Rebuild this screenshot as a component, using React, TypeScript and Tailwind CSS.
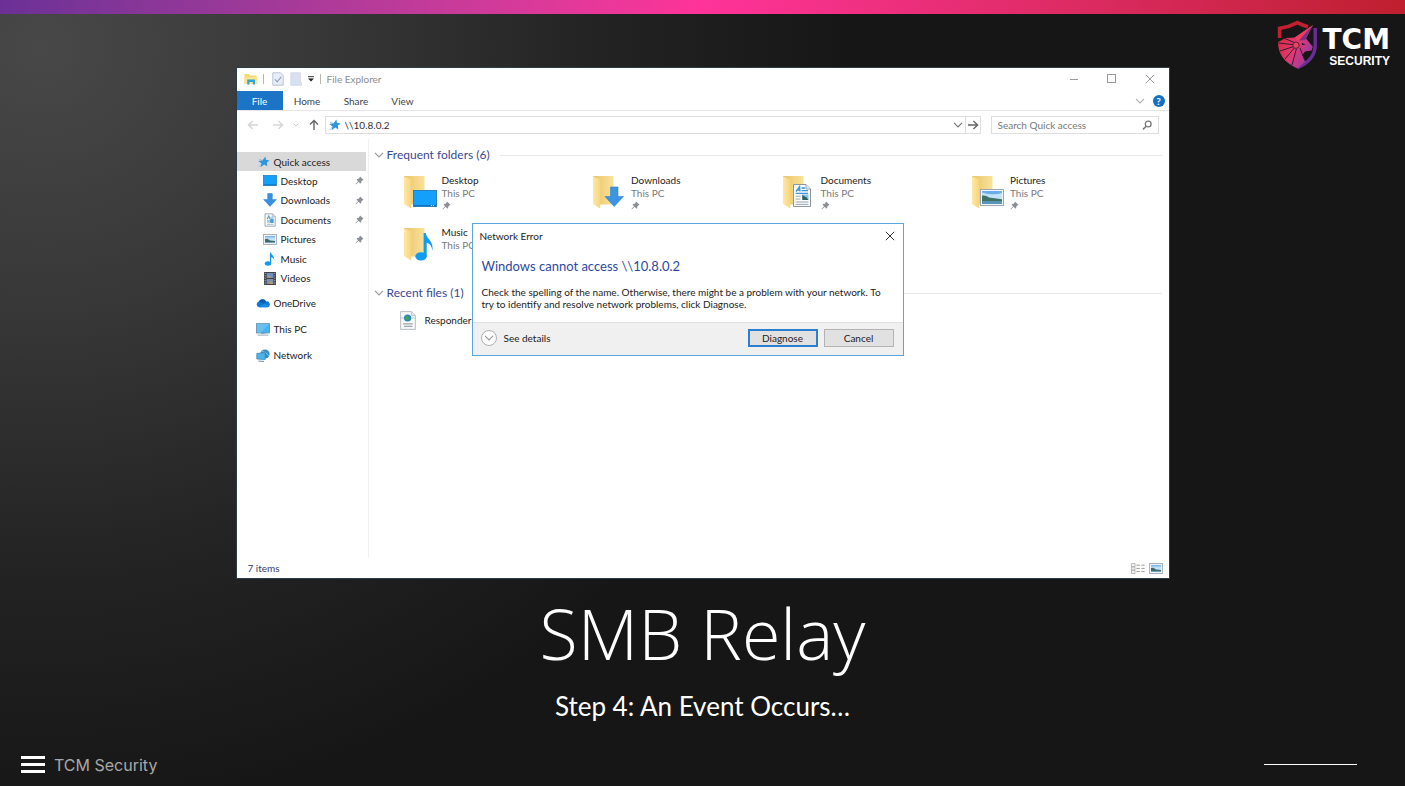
import React from "react";

type IconProps = { className?: string };

const Pin = ({ className = "" }: IconProps) => (
  <svg viewBox="0 0 10 10" className={`size-[9px] shrink-0 ${className}`} aria-hidden="true">
    <path d="M5.6 0.6 9.4 4.3 8.5 4.8 7.2 5.9 6.7 8 5.7 8.2 4 6.5 1.2 9.2 0.5 9.3 0.7 8.6 3.4 5.9 1.8 4.2 2.2 3.3 4.2 3 5.1 1.6Z" fill="#8b9097" />
  </svg>
);

const Star = ({ className = "" }: IconProps) => (
  <svg viewBox="0 0 12 12" className={`size-[12px] shrink-0 ${className}`} aria-hidden="true">
    <path d="M7.4 0.6 7.9 3.8 11.6 4.4 8.9 6.6 9.2 10.3 6.2 8.6 2.6 11.2 3.4 7.6 0.4 5.1 4.6 4.3Z" fill="#2f96dd" />
    <path d="M3.4 7.8 0.8 10.9M1.2 3.4 4.6 4.4" stroke="#7dbdea" strokeWidth="0.8" />
  </svg>
);

const DesktopIcon = ({ className = "" }: IconProps) => (
  <svg viewBox="0 0 14 11" className={`h-[11px] w-[14px] shrink-0 ${className}`} aria-hidden="true">
    <rect x="0.4" y="0.4" width="13.2" height="10.2" fill="#14a0fa" stroke="#2a7fc4" strokeWidth="0.8" />
    <path d="M1 9.8h12" stroke="#0b6fc4" strokeWidth="0.9" />
  </svg>
);

const DownloadIcon = ({ className = "" }: IconProps) => (
  <svg viewBox="0 0 14 14" className={`size-[14px] shrink-0 ${className}`} aria-hidden="true">
    <path d="M4.7 0.5H9.3V6.6H13.4L7 13.4 0.6 6.6H4.7Z" fill="#3791e2" stroke="#2c7fcb" strokeWidth="0.5" />
  </svg>
);

const DocumentIcon = ({ className = "" }: IconProps) => (
  <svg viewBox="0 0 12 14" className={`h-[14px] w-[12px] shrink-0 ${className}`} aria-hidden="true">
    <path d="M1 0.8H8.6L11.2 3.4V13.2H1Z" fill="#f8fafc" stroke="#9aa3ac" strokeWidth="0.9" />
    <path d="M8.4 0.8V3.6H11.2" fill="#dde3e8" stroke="#9aa3ac" strokeWidth="0.6" />
    <path d="M3 6.2 4.8 3 5.8 6.2M6.4 5H9.4M3 8H9.4" stroke="#4fa2dc" strokeWidth="1.1" fill="none" />
    <rect x="6.2" y="6" width="3.4" height="4" fill="#4e9cc9" />
    <path d="M3 9.7H6M3 11.4H9.4" stroke="#9cb8ca" strokeWidth="0.8" />
  </svg>
);

const PictureIcon = ({ className = "" }: IconProps) => (
  <svg viewBox="0 0 14 11" className={`h-[11px] w-[14px] shrink-0 ${className}`} aria-hidden="true">
    <rect x="0.5" y="0.5" width="13" height="10" fill="#eef1f5" stroke="#a3adb8" strokeWidth="0.9" />
    <rect x="2" y="2" width="10" height="7" fill="#c3e0f8" />
    <path d="M2 2H12V3.6H2Z" fill="#7fbaef" />
    <path d="M2 5 4.4 4.8 7 6.4 12 7V9H2Z" fill="#3c6a66" />
    <path d="M2 8H12V9H2Z" fill="#6fa3c8" />
  </svg>
);

const MusicIcon = ({ className = "" }: IconProps) => (
  <svg viewBox="0 0 12 14" className={`h-[14px] w-[12px] shrink-0 ${className}`} aria-hidden="true">
    <ellipse cx="4" cy="11.5" rx="3.2" ry="2.2" fill="#1199f0" />
    <path d="M5.9 0.4H7C7.2 3 10.8 3.9 10.2 8.2 9.8 6.4 8.6 5.5 7.2 5.3V11.5H5.9Z" fill="#1199f0" />
  </svg>
);

const VideoIcon = ({ className = "" }: IconProps) => (
  <svg viewBox="0 0 12 13" className={`h-[13px] w-[12px] shrink-0 ${className}`} aria-hidden="true">
    <rect width="12" height="13" fill="#3e4148" />
    <path d="M1.2 0.8V13M10.8 0.8V13" stroke="#b4b7bc" strokeWidth="1" strokeDasharray="1.2 1.2" />
    <rect x="2.6" y="1" width="6.8" height="5" fill="#6d8fc4" />
    <rect x="2.6" y="7" width="6.8" height="5" fill="#7d91a8" />
    <path d="M3 5.6 5 3 7 5.6M5 12 7 9 9.2 12" fill="#c79a5a" />
  </svg>
);

const OneDriveIcon = () => (
  <svg viewBox="0 0 14 10" className="h-[10px] w-[14px] shrink-0" aria-hidden="true">
    <path d="M3.2 9.3A2.9 2.9 0 0 1 2.6 3.7 4.2 4.2 0 0 1 10.1 3.4 3 3 0 0 1 11.4 9.3Z" fill="#0f78d2" />
    <path d="M3.2 9.3 8 5.6 13.4 7.6A2.3 2.3 0 0 1 11.4 9.3Z" fill="#1b8be0" />
    <path d="M2.6 3.7A4.2 4.2 0 0 1 10.1 3.4L8 5.6Z" fill="#0a5db4" />
  </svg>
);

const ComputerIcon = () => (
  <svg viewBox="0 0 14 13" className="h-[13px] w-[14px] shrink-0" aria-hidden="true">
    <rect x="0.4" y="0.6" width="13.2" height="9.4" fill="#46b2f0" stroke="#6a8fa8" strokeWidth="0.8" />
    <path d="M1 1H13L5 9.6H1Z" fill="#66c0f4" />
    <path d="M5 10.5H9M1.5 12.1H12.5" stroke="#8fa9bb" strokeWidth="1" />
  </svg>
);

const NetworkIcon = () => (
  <svg viewBox="0 0 14 13" className="h-[13px] w-[14px] shrink-0" aria-hidden="true">
    <circle cx="9" cy="5" r="4.6" fill="#3a8dc4" />
    <path d="M6 2.2Q10 3 13 7" stroke="#a3d8f5" strokeWidth="0.7" fill="none" />
    <path d="M0.8 4.4 9.2 3.6V10.6L0.8 10Z" fill="#49b4ee" stroke="#3a7ca6" strokeWidth="0.7" />
    <path d="M2.4 12.1 8 12.4" stroke="#6a8fa8" strokeWidth="1" />
  </svg>
);

const FolderBase = () => (
  <>
    <defs>
      <linearGradient id="folderFront" x1="0" x2="1">
        <stop offset="0" stopColor="#ffe8a6" />
        <stop offset="1" stopColor="#f7d57c" />
      </linearGradient>
      <linearGradient id="folderBack" x1="0" x2="1">
        <stop offset="0" stopColor="#e9c46a" />
        <stop offset="1" stopColor="#fae29a" />
      </linearGradient>
    </defs>
    <path d="M1 1H21.5V29.5H6Z" fill="url(#folderBack)" />
    <path d="M1 1.4 8.2 4.6V33.4L1 29Z" fill="url(#folderFront)" />
  </>
);

type Badge = "desktop" | "downloads" | "documents" | "pictures" | "music";

const FolderIcon = ({ badge }: { badge: Badge }) => (
  <svg viewBox="0 0 35 35" className="size-[35px] shrink-0" aria-hidden="true">
    <FolderBase />
    {badge === "desktop" && (
      <g>
        <rect x="10.5" y="15.5" width="23" height="16" fill="#14a0fa" stroke="#2b80bd" />
        <path d="M11 30.5H33" stroke="#0d74c4" />
        <path d="M28 30.5H32" stroke="#bde0f8" strokeDasharray="1 1" />
      </g>
    )}
    {badge === "downloads" && (
      <path d="M18.5 12H26V21.5H31.5L22.2 31.5 13 21.5H18.5Z" fill="#3a95e4" stroke="#2f83cf" strokeWidth="0.6" />
    )}
    {badge === "documents" && (
      <g>
        <path d="M11.5 9.5H24L28.5 14V31.5H11.5Z" fill="#fbfcfd" stroke="#8d959d" />
        <path d="M24 9.5V14H28.5" fill="#e3e8ed" stroke="#8d959d" strokeWidth="0.8" />
        <path d="M14 16.5 17.6 11.5 18 16.5M15 15H18M19.5 13H23M19.5 15.6H26M13.6 18.4H26" stroke="#3d95da" strokeWidth="1.3" fill="none" />
        <path d="M20 19.5H26.5V25H20Z" fill="#8cc4ea" />
        <path d="M20.4 20 24.5 22.4 26.5 25H20.4Z" fill="#2f6157" />
        <path d="M13.5 21.2H18.5M13.5 24H18.5M13.5 27H26.5M13.5 29.4H26.5" stroke="#8f9aa5" strokeWidth="0.9" />
      </g>
    )}
    {badge === "pictures" && (
      <g>
        <rect x="9.5" y="14.5" width="23" height="16" fill="#f2f4f7" stroke="#9da7b2" />
        <rect x="11" y="16" width="20" height="13" fill="#c3e1f9" />
        <path d="M11 16H31V18Q22 21 11 17.4Z" fill="#6aadea" />
        <path d="M11 20.6Q15 20 18 22.6L31 24.2V26.4H11Z" fill="#3d7466" />
        <path d="M11 26H31V29H11Z" fill="#5794b8" />
      </g>
    )}
    {badge === "music" && (
      <g fill="#119bf2">
        <ellipse cx="18" cy="29.4" rx="5.7" ry="4.2" />
        <path d="M20.6 6H22.8C23.4 12 30.8 14 29.4 23.4 28.6 18.8 26.6 16.4 23.7 15.8V29.4H20.6Z" />
      </g>
    )}
  </svg>
);

const HtmlFileIcon = () => (
  <svg viewBox="0 0 16 19" className="h-[19px] w-[16px] shrink-0" aria-hidden="true">
    <path d="M0.6 0.6H11.6L15.4 4.4V18.4H0.6Z" fill="#f6f7f8" stroke="#b4b8bc" strokeWidth="0.9" />
    <path d="M11.4 0.6V4.6H15.4" fill="#e2e5e8" stroke="#b4b8bc" strokeWidth="0.7" />
    <path d="M0.8 7H15" stroke="#9fc3d8" strokeWidth="0.8" />
    <circle cx="7.6" cy="7" r="3.6" fill="#2c86b8" />
    <path d="M5.2 5Q8 4 8.6 6.2T6.6 9.4Q5 8 5.2 5ZM9.4 7.4 11 6.6 10 9.4Z" fill="#3fa557" />
    <path d="M3 12.8H12.8M4 15.3H12.4" stroke="#a0a5aa" strokeWidth="1.2" />
  </svg>
);

const Chevron = ({ className = "" }: IconProps) => (
  <svg viewBox="0 0 10 6" className={`h-[6px] w-[10px] shrink-0 ${className}`} aria-hidden="true">
    <path d="M1 0.8 5 4.8 9 0.8" fill="none" stroke="currentColor" strokeWidth="1.2" />
  </svg>
);

const Arrow = ({ className = "" }: IconProps) => (
  <svg viewBox="0 0 12 10" className={`h-[10px] w-[12px] shrink-0 ${className}`} aria-hidden="true">
    <path d="M1 5H10.4M6.4 1 10.6 5 6.4 9" fill="none" stroke="currentColor" strokeWidth="1.4" />
  </svg>
);

const Close = ({ className = "" }: IconProps) => (
  <svg viewBox="0 0 10 10" className={`size-[10px] ${className}`} aria-hidden="true">
    <path d="M0.8 0.8 9.2 9.2M9.2 0.8 0.8 9.2" stroke="currentColor" strokeWidth="1" />
  </svg>
);

const Shield = () => (
  <svg viewBox="0 0 42 50" className="h-[50px] w-[42px] shrink-0" aria-hidden="true">
    <defs>
      <linearGradient id="dogFill" x1="0" y1="0.2" x2="1" y2="0.8">
        <stop offset="0" stopColor="#d8283c" />
        <stop offset="0.5" stopColor="#e03a72" />
        <stop offset="1" stopColor="#8a3bb0" />
      </linearGradient>
    </defs>
    <path d="M2.6 18V8.4Q12 7 20.5 2.6 25 5 31 6.8" fill="none" stroke="#c3202f" strokeWidth="3.6" />
    <path d="M38.2 8V25Q38.2 40 20.5 47.6" fill="none" stroke="#6a2c97" strokeWidth="3.4" />
    <path d="M36 5 29 18.4 35.8 26.8 34.6 30.4 28 31.4 25.4 35 28.6 41.6 20.5 48.4Q4 41.5 1.4 27L1 22 9 18 17.8 17.6Z" fill="url(#dogFill)" />
    <path d="M36 5 17.8 17.6 20.4 21Z" fill="#ef3b5d" />
    <path d="M36 5 22 20.4 28 20Z" fill="#7d2d86" />
    <path d="M1.4 23 16 24.6M3 31 16.4 26.6M8 39 17.4 28M15 45 19.4 28.8M8 18.6 17 22.4M23 28 28 41" stroke="#2a1430" strokeWidth="0.9" />
    <circle cx="19" cy="25.2" r="3.2" fill="#e8455f" stroke="#561a3a" strokeWidth="0.9" />
    <path d="M24.8 23 28.6 24.6 25.2 25Z" fill="#1a1020" />
  </svg>
);

const quickItems = [
  { label: "Desktop", icon: <DesktopIcon />, pinned: true },
  { label: "Downloads", icon: <DownloadIcon />, pinned: true },
  { label: "Documents", icon: <DocumentIcon />, pinned: true },
  { label: "Pictures", icon: <PictureIcon />, pinned: true },
  { label: "Music", icon: <MusicIcon />, pinned: false },
  { label: "Videos", icon: <VideoIcon />, pinned: false },
];

const rootItems = [
  { label: "OneDrive", icon: <OneDriveIcon /> },
  { label: "This PC", icon: <ComputerIcon /> },
  { label: "Network", icon: <NetworkIcon /> },
];

const folders: { label: string; badge: Badge; pinned: boolean }[] = [
  { label: "Desktop", badge: "desktop", pinned: true },
  { label: "Downloads", badge: "downloads", pinned: true },
  { label: "Documents", badge: "documents", pinned: true },
  { label: "Pictures", badge: "pictures", pinned: true },
  { label: "Music", badge: "music", pinned: false },
];

function TitleBar() {
  return (
    <div className="flex h-[23px] items-center pr-[14px] pb-px pl-[7px]">
      <svg viewBox="0 0 14 12" className="h-[12px] w-[14px]" aria-hidden="true">
        <path d="M0.5 1H5L6 2.4H12.5V11H0.5Z" fill="#f8d775" />
        <path d="M0.5 4H13.5V11H0.5Z" fill="#fbe38f" />
        <path d="M3.2 11.5V6.6H11V11.5H8.8V9H5.4V11.5Z" fill="#2fa5dd" />
      </svg>
      <span className="mx-[5px] h-[10px] w-px bg-[#b5b5b5]" />
      <button type="button" aria-label="Properties" className="ml-[3px]">
        <svg viewBox="0 0 12 14" className="h-[14px] w-[12px]" aria-hidden="true">
          <path d="M0.8 0.8H8.6L11.2 3.4V13.2H0.8Z" fill="#e8eef8" stroke="#b6c0d3" strokeWidth="0.9" />
          <path d="M3 7.4 5.2 9.8 9.2 4.8" fill="none" stroke="#93a0ba" strokeWidth="1.1" />
        </svg>
      </button>
      <button type="button" aria-label="New folder" className="ml-[6px]">
        <svg viewBox="0 0 12 14" className="h-[14px] w-[12px]" aria-hidden="true">
          <path d="M0.8 0.8H10.4V9.6L11.4 10.4V13.2H0.8Z" fill="#d8e1f1" stroke="#cbd5e7" strokeWidth="0.8" />
        </svg>
      </button>
      <button type="button" aria-label="Customize toolbar" className="ml-[5px]">
        <svg viewBox="0 0 8 6" className="h-[6px] w-[8px]" aria-hidden="true">
          <path d="M1 0.7H7" stroke="#333" strokeWidth="1" />
          <path d="M1 2.4H7L4 5.6Z" fill="#222" />
        </svg>
      </button>
      <span className="mx-[5px] h-[10px] w-px bg-[#b5b5b5]" />
      <span className="pl-px text-[10px] leading-[14px] text-[#8e8e8e]">File Explorer</span>
      <div className="ml-auto flex items-center gap-[28px] text-[#9a9a9a]">
        <button type="button" aria-label="Minimize">
          <svg viewBox="0 0 10 10" className="size-[10px]" aria-hidden="true">
            <path d="M1 5.5H9" stroke="currentColor" />
          </svg>
        </button>
        <button type="button" aria-label="Maximize">
          <svg viewBox="0 0 10 10" className="size-[10px]" aria-hidden="true">
            <rect x="0.5" y="0.5" width="8" height="8" fill="none" stroke="currentColor" />
          </svg>
        </button>
        <button type="button" aria-label="Close window">
          <Close />
        </button>
      </div>
    </div>
  );
}

function Ribbon() {
  return (
    <div className="flex h-[20px] items-center border-b border-[#e6e6e6] text-[10px] leading-[14px] text-[#444]">
      <button type="button" className="h-[19px] w-[46px] bg-[#1b74c5] text-white">File</button>
      <button type="button" className="w-[49px]">Home</button>
      <button type="button" className="w-[49px]">Share</button>
      <button type="button" className="w-[44px]">View</button>
      <button type="button" aria-label="Expand ribbon" className="mr-[8px] ml-auto text-[#b0b0b0]">
        <Chevron />
      </button>
      <button type="button" aria-label="Help" className="mr-[4px] flex size-[12px] items-center justify-center rounded-full bg-[#1570c4] text-[10px] leading-[12px] font-bold text-white">
        ?
      </button>
    </div>
  );
}

function AddressRow() {
  return (
    <div className="flex h-[28px] items-center pr-[10px] pl-[10px] text-[#666]">
      <button type="button" aria-label="Back"><Arrow className="rotate-180 text-[#d6d6d6]" /></button>
      <button type="button" aria-label="Forward" className="ml-[13px]"><Arrow className="text-[#d6d6d6]" /></button>
      <button type="button" aria-label="Recent locations" className="ml-[9px]">
        <svg viewBox="0 0 6 4" className="h-[4px] w-[6px]" aria-hidden="true">
          <path d="M0.8 0.8 3 3 5.2 0.8" fill="none" stroke="#c4c4c4" />
        </svg>
      </button>
      <button type="button" aria-label="Up" className="ml-[9px]"><Arrow className="-rotate-90" /></button>
      <div className="ml-[5px] flex h-[18px] min-w-0 flex-1 items-center border border-[#dedede]">
        <Star className="ml-[3px]" />
        <input aria-label="Address" defaultValue={"\\\\10.8.0.2"} className="ml-[4px] min-w-0 flex-1 text-[10px] leading-[14px] text-[#333] outline-none" />
        <button type="button" aria-label="Previous locations" className="mr-[2px] text-[#777]"><Chevron /></button>
        <button type="button" aria-label="Go" className="flex h-full w-[15px] items-center justify-center border-l border-[#dedede]"><Arrow /></button>
      </div>
      <div className="ml-[10px] flex h-[18px] w-[168px] items-center border border-[#dedede]">
        <input type="search" aria-label="Search" placeholder="Search Quick access" className="min-w-0 flex-1 pl-[6px] text-[10px] leading-[14px] outline-none placeholder:text-[#777]" />
        <svg viewBox="0 0 12 12" className="mr-[5px] size-[12px]" aria-hidden="true">
          <circle cx="7.2" cy="5" r="2.9" fill="none" stroke="#777" strokeWidth="1.3" />
          <path d="M5.2 7.2 2 10.4" stroke="#777" strokeWidth="1.5" />
        </svg>
      </div>
    </div>
  );
}

function Sidebar() {
  return (
    <nav aria-label="Locations" className="w-[132px] shrink-0 border-r border-[#f1f1f1] pt-[13px] text-[10px] leading-[14px] text-[#1c1c1c]">
      <a href="#quick-access" className="mr-[2px] flex h-[19px] items-center gap-[4px] bg-[#d9d9d9] pl-[21px]">
        <Star />
        Quick access
      </a>
      <ul className="grid h-[117px] auto-rows-fr">
        {quickItems.map((item) => (
          <li key={item.label}>
            <a href={`#${item.label}`} className="flex h-full items-center gap-[4px] pr-[4px] pl-[26px]">
              <span className="flex w-[14px] justify-center">{item.icon}</span>
              {item.label}
              {item.pinned && <Pin className="ml-auto" />}
            </a>
          </li>
        ))}
      </ul>
      <ul className="mt-[2px]">
        {rootItems.map((item) => (
          <li key={item.label}>
            <a href={`#${item.label}`} className="flex h-[26px] items-center gap-[4px] pl-[19px]">
              {item.icon}
              {item.label}
            </a>
          </li>
        ))}
      </ul>
    </nav>
  );
}

function SectionHeading({ children }: { children: React.ReactNode }) {
  return (
    <h2 className="flex h-[16px] items-center pr-[7px] pl-[5px] text-[12px] leading-[16px] text-[#3b4796]">
      <Chevron className="mr-[3px] text-[#9a9a9a]" />
      {children}
      <span className="ml-[10px] h-px flex-1 bg-[#e8e8e8]" />
    </h2>
  );
}

function Content() {
  return (
    <main className="min-w-0 flex-1 pt-[8px] text-[10px] leading-[13px] text-[#222]">
      <SectionHeading>Frequent folders (6)</SectionHeading>
      <ul className="mt-[11px] grid auto-rows-[52px] grid-cols-4 pr-[8px] pl-[34px]">
        {folders.map((folder) => (
          <li key={folder.label}>
            <a href={`#folder-${folder.label}`} className="flex items-start gap-[4px]">
              <span className="pt-px"><FolderIcon badge={folder.badge} /></span>
              <span className="flex flex-col">
                <span>{folder.label}</span>
                <span className="text-[#7a7a7a]">This PC</span>
                {folder.pinned && <Pin className="mt-[1px]" />}
              </span>
            </a>
          </li>
        ))}
      </ul>
      <div className="pt-[7px]">
        <SectionHeading>Recent files (1)</SectionHeading>
        <a href="#responder" className="mt-[10px] flex items-center gap-[9px] pl-[31px]">
          <HtmlFileIcon />
          Responder
        </a>
      </div>
    </main>
  );
}

function ErrorDialog() {
  return (
    <section role="dialog" aria-label="Network Error" className="absolute top-[155px] left-[235px] flex h-[133px] w-[432px] flex-col border border-[#5ba5dc] bg-white text-[10px] leading-[12px] text-[#222]">
      <header className="flex h-[24px] items-center justify-between pr-[8px] pl-[7px]">
        <span>Network Error</span>
        <button type="button" aria-label="Close dialog"><Close className="text-[#333]" /></button>
      </header>
      <div className="flex-1 pt-[10px] pr-[10px] pl-[9px]">
        <h2 className="text-[13px] leading-[16px] text-[#2c49a4]">{"Windows cannot access \\\\10.8.0.2"}</h2>
        <p className="mt-[12px]">
          Check the spelling of the name. Otherwise, there might be a problem with your network. To
          <br />
          try to identify and resolve network problems, click Diagnose.
        </p>
      </div>
      <footer className="flex h-[33px] items-center border-t border-[#e0e0e0] bg-[#f0f0f0] pr-[9px] pb-[2px] pl-[8px]">
        <button type="button" className="flex items-center gap-[7px]">
          <span className="flex size-[16px] items-center justify-center rounded-full border border-[#b0b0b0] bg-white text-[#9a9a9a]">
            <Chevron />
          </span>
          See details
        </button>
        <button type="button" className="ml-auto h-[18px] w-[70px] border-2 border-[#2b7fd0] bg-[#e1e1e1] leading-[14px]">Diagnose</button>
        <button type="button" className="ml-[6px] h-[18px] w-[70px] border border-[#b4b4b4] bg-[#e1e1e1]">Cancel</button>
      </footer>
    </section>
  );
}

function ExplorerWindow() {
  return (
    <section aria-label="File Explorer" className="relative mx-auto flex min-h-[510px] w-full max-w-[932px] flex-col bg-white shadow-[0_0_0_1px_#2b3d4a]">
      <TitleBar />
      <Ribbon />
      <AddressRow />
      <div className="flex flex-1">
        <Sidebar />
        <Content />
      </div>
      <div className="flex h-[20px] items-center pr-[6px] pl-[11px] text-[10px] leading-[14px] text-[#33406e]">
        7 items
        <button type="button" aria-label="Details view" className="ml-auto">
          <svg viewBox="0 0 14 11" className="h-[11px] w-[14px]" aria-hidden="true">
            <path d="M0.5 0.5H4V3.8H0.5ZM0.5 3.8H4V7.2H0.5ZM0.5 7.2H4V10.5H0.5Z" fill="#f4f4f4" stroke="#aaa" strokeWidth="0.8" />
            <path d="M5.4 2.2H8.8M5.4 5.4H8.8M5.4 8.6H8.8M10.4 2.2H13.6M10.4 5.4H13.6M10.4 8.6H13.6" stroke="#9a9a9a" strokeWidth="1" />
          </svg>
        </button>
        <button type="button" aria-label="Large icons view" className="ml-[4px]">
          <PictureIcon />
        </button>
      </div>
      <ErrorDialog />
    </section>
  );
}

export default function App() {
  return (
    <div className="flex min-h-screen flex-col bg-[#161616] bg-[radial-gradient(ellipse_58%_98%_at_3%_6%,#484848_0%,#383838_33%,#232323_68%,#161616_100%)] font-[Lato,'Open_Sans',sans-serif] text-white">
      <div className="h-[14px] bg-linear-to-r from-[#6b3096] via-[#ff3399] to-[#bf1f2e]" />
      <header className="flex h-[54px] items-start justify-end pt-[6px] pr-[15px]">
        <a href="#home" aria-label="TCM Security home" className="flex items-start gap-[3px]">
          <Shield />
          <span className="flex flex-col items-end pt-[5px]">
            <span className="font-['DejaVu_Sans',sans-serif] text-[28px] leading-[30px] font-bold">TCM</span>
            <span className="font-['Liberation_Sans',sans-serif] text-[12px] leading-[12px] font-bold">SECURITY</span>
          </span>
        </a>
      </header>
      <ExplorerWindow />
      <h1 className="mt-[13px] text-center font-['Open_Sans',sans-serif] text-[70px] leading-[84px] font-light">SMB Relay</h1>
      <p className="mt-[15px] text-center text-[26px] leading-[32px]">Step 4: An Event Occurs…</p>
      <footer className="mt-auto flex h-[43px] items-center justify-between pr-[48px] pl-[21px]">
        <div className="flex items-center gap-[9px]">
          <button type="button" aria-label="Menu" className="flex w-[24px] flex-col gap-[4px]">
            <span className="h-[3px] bg-white" />
            <span className="h-[3px] bg-white" />
            <span className="h-[3px] bg-white" />
          </button>
          <span className="font-[Inter,sans-serif] text-[16px] leading-[20px] text-[#a8a8a8]">TCM Security</span>
        </div>
        <span className="h-px w-[93px] bg-white" />
      </footer>
    </div>
  );
}
